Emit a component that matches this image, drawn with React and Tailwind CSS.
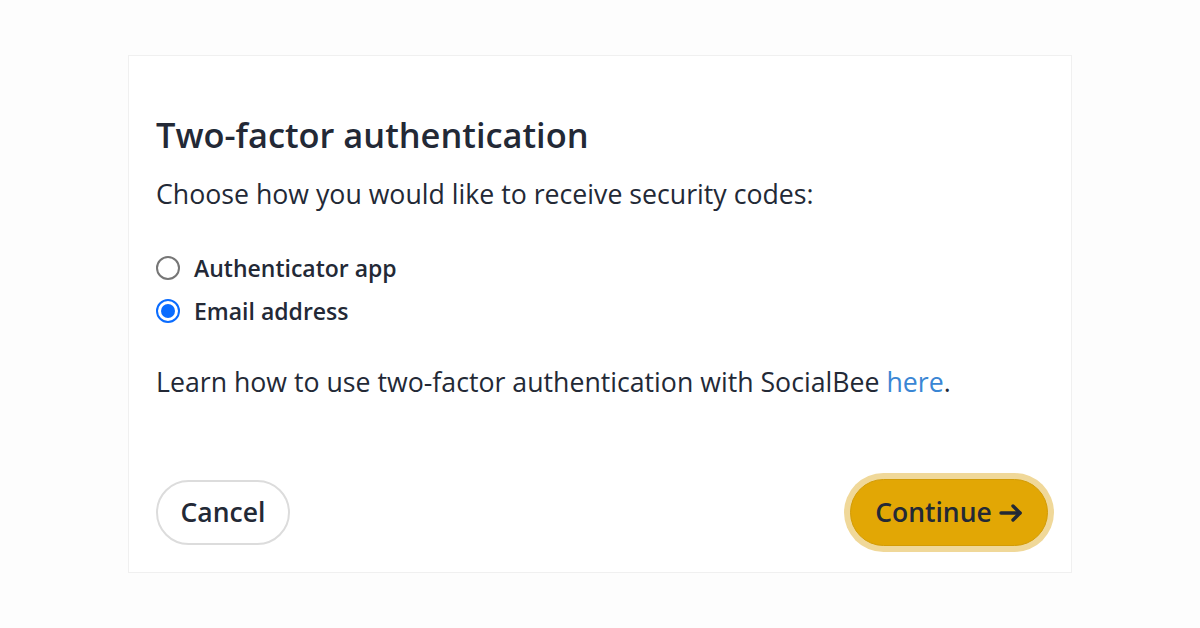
import React, { useState } from 'react';

const Radio = ({ checked, label, onChange }) => (
  <label className="flex items-center gap-[14px] h-[32px] cursor-pointer">
    <span
      className={
        checked
          ? 'w-6 h-6 rounded-full border-2 border-[#0a6cff] flex items-center justify-center bg-white'
          : 'w-6 h-6 rounded-full border-2 border-[#767676] bg-white'
      }
      onClick={onChange}
    >
      {checked && <span className="w-[14px] h-[14px] rounded-full bg-[#0a6cff]" />}
    </span>
    <span className="text-[23px] leading-[32px] font-semibold text-[#232936]">{label}</span>
  </label>
);

const App = () => {
  const [method, setMethod] = useState('email');

  return (
    <div className="w-[1200px] h-[628px] bg-[#fdfdfd] pt-[55px] pl-[128px] font-['Open_Sans',sans-serif]">
      <div className="w-[944px] h-[518px] bg-white border border-[#f0f0f0] px-[27px] pt-[57px]">
        <h1 className="text-[34.4px] font-semibold text-[#232936] leading-[44px]">Two-factor authentication</h1>
        <p className="mt-[19px] text-[26.7px] text-[#232936] leading-[36px]">
          Choose how you would like to receive security codes:
        </p>

        <div className="mt-[40px] flex flex-col gap-[11px]">
          <Radio checked={method === 'app'} label="Authenticator app" onChange={() => setMethod('app')} />
          <Radio checked={method === 'email'} label="Email address" onChange={() => setMethod('email')} />
        </div>

        <p className="mt-[37px] text-[26.7px] text-[#232936] leading-[36px]">
          Learn how to use two-factor authentication with SocialBee{' '}
          <a href="#" className="text-[#3a86d4]">here</a>.
        </p>

        <div className="mt-[73px] flex items-center justify-between">
          <button className="h-[65px] w-[134px] rounded-full border-2 border-[#dcdcdc] bg-white text-[26.5px] font-semibold text-[#232936]">
            Cancel
          </button>
          <div className="rounded-full p-[6px] bg-[#f0d899] mr-[-10px]">
            <button className="h-[67px] w-[198px] rounded-full bg-[#e2a705] border border-[#d39c06] text-[26.5px] font-semibold text-[#232936] flex items-center justify-center gap-[7px]">
              Continue
              <svg width="24" height="18" viewBox="0 0 24 18" fill="none" stroke="currentColor" strokeWidth="3.4" strokeLinecap="round" strokeLinejoin="round">
                <path d="M2 9h19" />
                <path d="M14 2l7 7-7 7" />
              </svg>
            </button>
          </div>
        </div>
      </div>
    </div>
  );
};

export default App;
